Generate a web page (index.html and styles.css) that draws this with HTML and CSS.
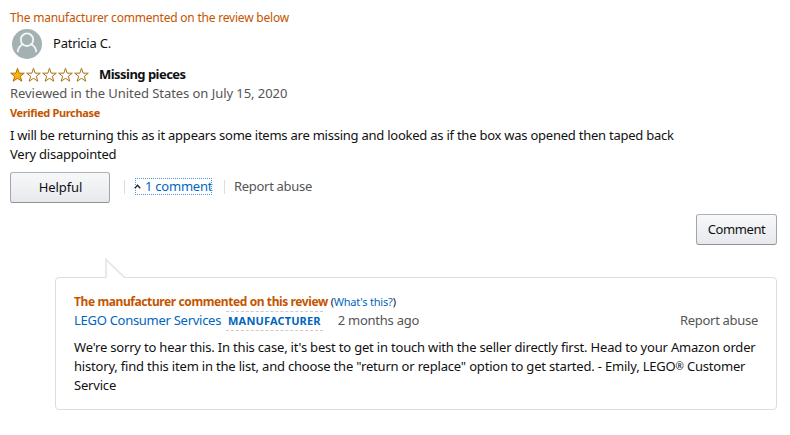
FILE: index.html
```html
<!DOCTYPE html>
<html lang="en">
<head>
    <meta charset="UTF-8">
    <meta name="viewport" content="width=device-width, initial-scale=1.0">
    <title>Customer Review</title>
    <link rel="stylesheet" href="styles.css">
</head>
<body>
    <div class="review">
        <div class="notice">The manufacturer commented on the review below</div>

        <div class="profile">
            <svg class="avatar" viewBox="0 0 30 30" width="30" height="30">
                <circle cx="15" cy="15" r="15" fill="#a3b1b2"/>
                <g fill="none" stroke="#f1f5f5" stroke-width="1.8">
                    <ellipse cx="15" cy="10.7" rx="6.200" ry="6.300"/>
                    <path d="M5.700 23.200c.4-4.200 2.200-6.800 5.800-8M24.300 23.200c-.4-4.200-2.200-6.800-5.800-8"/>
                </g>
            </svg>
            <span class="name">Patricia C.</span>
        </div>

        <div class="rating">
            <svg class="stars" viewBox="0 0 80 16" width="80" height="16">
                <defs>
                    <path id="star" d="M7.500 1.300 9.200 6.200H14.300L10.300 9.300 11.800 14.200 7.500 11.300 3.200 14.200 4.700 9.300.7 6.200H5.800Z" stroke="#ab6f16" stroke-width="1"/>
                </defs>
                <use href="#star" x="0" fill="#ffb400"/>
                <use href="#star" x="16" fill="#fff"/>
                <use href="#star" x="32" fill="#fff"/>
                <use href="#star" x="48" fill="#fff"/>
                <use href="#star" x="64" fill="#fff"/>
            </svg>
            <span class="title">Missing pieces</span>
        </div>

        <div class="date">Reviewed in the United States on July 15, 2020</div>
        <div class="verified">Verified Purchase</div>
        <div class="text">I will be returning this as it appears some items are missing and looked as if the box was opened then taped back<br>Very disappointed</div>

        <div class="actions">
            <button class="btn helpful">Helpful</button>
            <span class="divider"></span>
            <a class="comments" href="#"><svg viewBox="0 0 7 5" width="7" height="5"><path d="M.7 4.200 3.500 1.200 6.300 4.200" fill="none" stroke="#222" stroke-width="1.300"/></svg><span>1 comment</span></a>
            <span class="divider second"></span>
            <a class="report" href="#">Report abuse</a>
        </div>

        <div class="comment-row">
            <button class="btn comment-btn">Comment</button>
        </div>

        <div class="reply">
            <svg class="pointer" viewBox="0 0 21 21" width="21" height="21">
                <path d="M.5 21V1L20 20.500V21Z" fill="#fff"/>
                <path d="M1 20V1.500L19.500 19.500" fill="none" stroke="#e7e7e7" stroke-width="1.800"/>
            </svg>
            <div class="reply-title"><b>The manufacturer commented on this review</b> <span class="whats">(<a href="#">What's this?</a>)</span></div>
            <div class="reply-info">
                <a class="author" href="#">LEGO Consumer Services</a>
                <span class="badge">MANUFACTURER</span>
                <span class="ago">2 months ago</span>
                <a class="report" href="#">Report abuse</a>
            </div>
            <div class="reply-text">We're sorry to hear this. In this case, it's best to get in touch with the seller directly first. Head to your Amazon order history, find this item in the list, and choose the "return or replace" option to get started. - Emily, LEGO<span class="reg">®</span> Customer Service</div>
        </div>
    </div>
</body>
</html>
```
FILE: styles.css
```css
* {
    box-sizing: border-box;
}
body {
    margin: 0;
    background-color: #fff;
    color: #111;
    font-family: "Noto Sans", "Open Sans", sans-serif;
    font-size: 13px;
    line-height: 19px;
    letter-spacing: -0.24px;
    white-space: nowrap;
}
a {
    color: #0066c0;
    text-decoration: none;
}
.review {
    padding: 8px 13px 0 10px;
}
.notice {
    height: 21px;
    font-size: 12px;
    letter-spacing: -0.21px;
    color: #c45500;
}
.profile {
    display: flex;
    align-items: center;
    height: 30px;
    padding-left: 2px;
}
.name {
    margin-left: 11px;
    padding-bottom: 2px;
}
.rating {
    display: flex;
    align-items: center;
    height: 19px;
    margin-top: 6px;
}
.stars {
    margin-top: 1px;
}
.title {
    margin-left: 9px;
    font-weight: bold;
    letter-spacing: -0.53px;
}
.date {
    color: #555;
    letter-spacing: -0.06px;
}
.verified {
    height: 19px;
    font-size: 11px;
    font-weight: bold;
    letter-spacing: -0.35px;
    color: #c45500;
}
.text {
    margin-top: 4px;
}
.actions {
    display: flex;
    align-items: center;
    height: 31px;
    margin-top: 8px;
}
.btn {
    height: 31px;
    padding: 0 0 2px;
    border: 1px solid;
    border-color: #adb1b8 #a2a6ac #8d9096;
    border-radius: 3px;
    background: linear-gradient(#f7f8fa, #e7e9ec);
    color: #111;
    font-family: inherit;
    font-size: 13px;
}
.helpful {
    width: 100px;
    padding-left: 1px;
    letter-spacing: -0.1px;
}
.divider {
    width: 1px;
    height: 14px;
    margin-left: 14px;
    margin-bottom: 2px;
    background-color: #ddd;
}
.comments {
    display: flex;
    align-items: center;
    gap: 4px;
    width: 77px;
    height: 17px;
    margin-left: 10px;
    margin-bottom: 3px;
    outline: 1px dotted #4c9bdc;
    outline-offset: -1px;
}
.comments svg {
    flex-shrink: 0;
    margin-left: -1px;
}
.divider.second {
    margin-left: 12px;
}
.report {
    color: #555;
}
.actions .report {
    margin-left: 9px;
    padding-bottom: 2px;
    letter-spacing: -0.3px;
}
.comment-row {
    display: flex;
    justify-content: flex-end;
    margin-top: 11px;
}
.comment-btn {
    width: 81px;
    letter-spacing: -0.4px;
}
.reply {
    position: relative;
    height: 133px;
    margin: 32px 0 0 45px;
    padding: 14px 18px 0;
    border: 1px solid #ddd;
    border-radius: 4px;
}
.pointer {
    position: absolute;
    left: 49px;
    top: -20px;
}
.reply-title {
    font-size: 12px;
    letter-spacing: -0.4px;
    color: #c45500;
}
.whats {
    font-size: 11px;
    letter-spacing: -0.2px;
    color: #111;
}
.reply-info {
    display: flex;
    align-items: center;
    height: 19px;
}
.author {
    letter-spacing: -0.28px;
}
.badge {
    height: 20px;
    margin-left: 5px;
    padding: 0 2px;
    border-top: 1px dashed #ccc;
    border-bottom: 1px dashed #ccc;
    color: #0066c0;
    font-size: 11px;
    font-weight: bold;
    letter-spacing: 0.15px;
    line-height: 18px;
}
.ago {
    margin-left: 15px;
    color: #555;
}
.reply-info .report {
    margin-left: auto;
    letter-spacing: -0.3px;
}
.reply-text {
    margin-top: 8px;
    letter-spacing: -0.19px;
    white-space: normal;
}
.reg {
    font-size: 10px;
    line-height: 1;
    vertical-align: 1px;
}
```
